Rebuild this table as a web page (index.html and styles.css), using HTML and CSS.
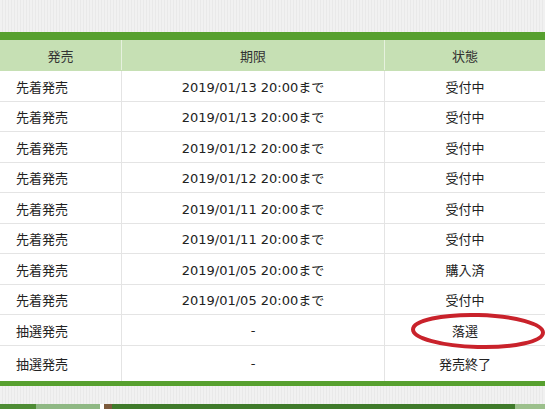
FILE: index.html
```html
<!DOCTYPE html>
<html lang="ja">
<head>
    <meta charset="UTF-8">
    <title>販売状況</title>
    <link rel="stylesheet" href="styles.css">
</head>
<body>
    <!-- BEGIN::sales -->
    <section class="sales">
        <table class="sales-table">
            <thead>
                <tr>
                    <th class="col-type">発売</th>
                    <th class="col-limit">期限</th>
                    <th class="col-state">状態</th>
                </tr>
            </thead>
            <tbody>
                <tr><td class="col-type">先着発売</td><td class="col-limit">2019/01/13 20:00まで</td><td class="col-state">受付中</td></tr>
                <tr><td class="col-type">先着発売</td><td class="col-limit">2019/01/13 20:00まで</td><td class="col-state">受付中</td></tr>
                <tr><td class="col-type">先着発売</td><td class="col-limit">2019/01/12 20:00まで</td><td class="col-state">受付中</td></tr>
                <tr><td class="col-type">先着発売</td><td class="col-limit">2019/01/12 20:00まで</td><td class="col-state">受付中</td></tr>
                <tr><td class="col-type">先着発売</td><td class="col-limit">2019/01/11 20:00まで</td><td class="col-state">受付中</td></tr>
                <tr><td class="col-type">先着発売</td><td class="col-limit">2019/01/11 20:00まで</td><td class="col-state">受付中</td></tr>
                <tr><td class="col-type">先着発売</td><td class="col-limit">2019/01/05 20:00まで</td><td class="col-state">購入済</td></tr>
                <tr><td class="col-type">先着発売</td><td class="col-limit">2019/01/05 20:00まで</td><td class="col-state">受付中</td></tr>
                <tr>
                    <td class="col-type">抽選発売</td>
                    <td class="col-limit">-</td>
                    <td class="col-state marked">
                        落選
                        <svg class="circle-mark" width="140" height="44" viewBox="0 0 140 44">
                            <ellipse cx="69" cy="22" rx="65" ry="16" fill="none" stroke="#c9222b" stroke-width="4" transform="rotate(1.5 69 22)"/>
                        </svg>
                    </td>
                </tr>
                <tr><td class="col-type">抽選発売</td><td class="col-limit">-</td><td class="col-state">発売終了</td></tr>
            </tbody>
        </table>
    </section>
    <!-- END::sales -->
    <div class="banner-strip"></div>
</body>
</html>
```

FILE: styles.css
```css
*{
    margin: 0;
    padding: 0;
    box-sizing: border-box;
}

body{
    font-family: "DejaVu Sans", "Noto Sans CJK JP", sans-serif;
    background: repeating-linear-gradient(90deg, #f1f1f1 0 2px, #e9e9e9 2px 3px);
    height: 409px;
    overflow: hidden;
}

.sales{
    padding-top: 32px;
    padding-bottom: 18px;
}

.sales-table{
    width: 545px;
    border-collapse: collapse;
    table-layout: fixed;
    background: #fff;
    border-top: 8px solid #57a02f;
    border-bottom: 5px solid #57a02f;
    font-size: 13px;
    color: #222;
}

.sales-table th,
.sales-table td{
    box-sizing: content-box;
    height: 30px;
    padding: 0;
    font-weight: normal;
    text-align: center;
    border-bottom: 1px solid #e4e4e4;
    border-left: 1px solid #e4e4e4;
}

.sales-table th{
    background: #c6e0b4;
    color: #333;
    border-bottom-color: #c6e0b4;
    border-left-color: #e6f1de;
}

.sales-table tbody tr:nth-child(even) td{
    height: 29px;
}

.sales-table tbody tr:last-child td{
    height: 35px;
    border-bottom: none;
}

.sales-table tr > :first-child{
    border-left: none;
}

.col-type{
    width: 121px;
}

.sales-table td.col-type{
    text-align: left;
    padding-left: 16px;
}

.col-limit{
    width: 262px;
}

.marked{
    position: relative;
}

.circle-mark{
    position: absolute;
    left: 24px;
    top: -6px;
}

.banner-strip{
    height: 5px;
    background: linear-gradient(90deg,
        #4e8c35 0 36px,
        #8fb884 36px 100px,
        #ffffff 100px 104px,
        #7c5a3c 104px 112px,
        #3f7a2b 112px 515px,
        #9cc08c 515px 545px);
}
```
